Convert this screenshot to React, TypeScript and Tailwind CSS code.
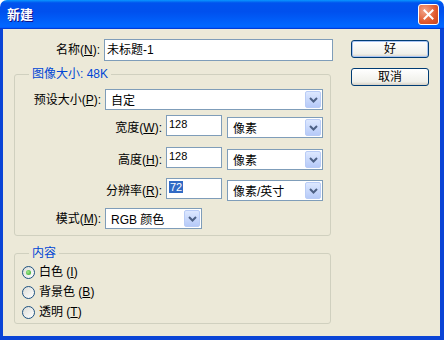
import * as React from "react";

const font = "font-['Liberation_Sans','Noto_Sans_CJK_SC',sans-serif]";

function Chevron() {
  return (
    <svg width="9" height="6" viewBox="0 0 9 6">
      <path d="M1 1 L4.5 4.5 L8 1" fill="none" stroke="#4D6185" strokeWidth="2" />
    </svg>
  );
}

function Select({ value, className = "" }: { value: string; className?: string }) {
  return (
    <div className={`flex h-[21px] items-stretch border border-[#7F9DB9] bg-white p-[1px] ${className}`}>
      <span className="flex flex-1 items-center pl-[4px] pt-[2px] text-[12px] text-black">{value}</span>
      <span className="flex w-[16px] items-center justify-center rounded-[2px] border border-[#B9CCF6] bg-[linear-gradient(to_bottom,#DDE8FF,#B6CAF8)]">
        <Chevron />
      </span>
    </div>
  );
}

function Label({ text, k, className = "" }: { text: string; k: string; className?: string }) {
  return (
    <span className={`whitespace-nowrap text-right text-[12px] text-black ${className}`}>
      {text}(<span className="underline">{k}</span>):
    </span>
  );
}

function NumberBox({ value, selected = false }: { value: string; selected?: boolean }) {
  return (
    <div className="h-[21px] w-[56px] border border-[#7F9DB9] bg-white pl-[2px] pt-[1px] text-[11px] leading-[14px] text-black">
      {selected ? <span className="bg-[#316AC5] px-[1px] text-white">{value}</span> : value}
    </div>
  );
}

function Radio({ checked, text, k }: { checked?: boolean; text: string; k: string }) {
  return (
    <div className="flex h-[20px] items-center gap-[4px]">
      <span className="flex h-[13px] w-[13px] items-center justify-center rounded-full border border-[#1C5180] bg-[linear-gradient(135deg,#DCDCD6,#FFFFFF)]">
        {checked && (
          <span className="h-[5px] w-[5px] rounded-full bg-[radial-gradient(circle_at_40%_40%,#A7E98E,#21A121)]" />
        )}
      </span>
      <span className="text-[12px] text-black">
        {text} (<span className="underline">{k}</span>)
      </span>
    </div>
  );
}

function XpButton({ text, primary = false }: { text: string; primary?: boolean }) {
  return (
    <button
      type="button"
      className={`flex h-[18px] w-[78px] items-center justify-center rounded-[3px] border border-[#003C74] bg-[linear-gradient(to_bottom,#FFFFFF,#F0F0EA_80%,#D6D0C5)] text-[12px] text-black ${
        primary ? "shadow-[inset_0_0_0_1px_#A9C4F3]" : ""
      }`}
    >
      {text}
    </button>
  );
}

export default function App() {
  return (
    <div className={`flex h-[340px] w-[444px] flex-col bg-white ${font}`}>
      <div className="flex h-[29px] items-center justify-between rounded-t-[7px] bg-[linear-gradient(to_bottom,#0997FF_0%,#0053EE_10%,#0050EE_40%,#0066FF_88%,#0066FF_93%,#005BFF_95%,#003DD7_97%,#003DD7_100%)] pl-[7px] pr-[5px]">
        <span className="text-[13px] font-bold text-white [text-shadow:1px_1px_0_#0F1089]">新建</span>
        <span className="flex h-[21px] w-[21px] items-center justify-center rounded-[3px] border border-white bg-[radial-gradient(circle_at_30%_30%,#F2A58A,#E0582C_60%,#C5461F)]">
          <svg width="11" height="11" viewBox="0 0 11 11">
            <path d="M1.5 1.5 L9.5 9.5 M9.5 1.5 L1.5 9.5" stroke="white" strokeWidth="2" strokeLinecap="square" />
          </svg>
        </span>
      </div>

      <div className="flex flex-1 border-x-[3px] border-b-[4px] border-r-[4px] border-[#0A44D6] bg-[#ECE9D8] pl-[11px] pt-[10px]">
        <div className="flex w-[319px] flex-col">
          <div className="flex items-center gap-[4px]">
            <Label text="名称" k="N" className="w-[86px]" />
            <div className="flex h-[22px] w-[229px] items-center border border-[#7F9DB9] bg-white pl-[2px] text-[12px] text-black">
              未标题-1
            </div>
          </div>

          <fieldset className="mt-[6px] w-[317px] rounded-[3px] border border-[#D0D0BF] p-0 pb-[6px]">
            <legend className="ml-[14px] px-[3px] text-[12px] leading-[14px] text-[#0046D5]">图像大小: 48K</legend>
            <div className="mt-[8px] flex items-center gap-[4px]">
              <Label text="预设大小" k="P" className="w-[86px]" />
              <Select value="自定" className="h-[20px] w-[218px]" />
            </div>
            <div className="mt-[5px] flex items-start">
              <Label text="宽度" k="W" className="mt-[4px] w-[147px]" />
              <div className="ml-[4px]">
                <NumberBox value="128" />
              </div>
              <Select value="像素" className="ml-[5px] mt-[2px] w-[96px]" />
            </div>
            <div className="mt-[9px] flex items-start">
              <Label text="高度" k="H" className="mt-[4px] w-[147px]" />
              <div className="ml-[4px]">
                <NumberBox value="128" />
              </div>
              <Select value="像素" className="ml-[5px] mt-[2px] w-[96px]" />
            </div>
            <div className="mt-[8px] flex items-start">
              <Label text="分辨率" k="R" className="mt-[4px] w-[147px]" />
              <div className="ml-[4px]">
                <NumberBox value="72" selected />
              </div>
              <Select value="像素/英寸" className="ml-[5px] mt-[2px] w-[96px]" />
            </div>
            <div className="mt-[7px] flex items-center gap-[4px]">
              <Label text="模式" k="M" className="w-[86px]" />
              <Select value="RGB 颜色" className="w-[97px]" />
            </div>
          </fieldset>

          <fieldset className="mt-[10px] w-[317px] rounded-[3px] border border-[#D0D0BF] p-0 pb-[1px]">
            <legend className="ml-[14px] px-[3px] text-[12px] leading-[14px] text-[#0046D5]">内容</legend>
            <div className="mt-[2px] flex flex-col pl-[7px]">
              <Radio checked text="白色" k="I" />
              <Radio text="背景色" k="B" />
              <Radio text="透明" k="T" />
            </div>
          </fieldset>
        </div>

        <div className="ml-[18px] mt-[1px] flex flex-col gap-[10px]">
          <XpButton text="好" primary />
          <XpButton text="取消" />
        </div>
      </div>
    </div>
  );
}
